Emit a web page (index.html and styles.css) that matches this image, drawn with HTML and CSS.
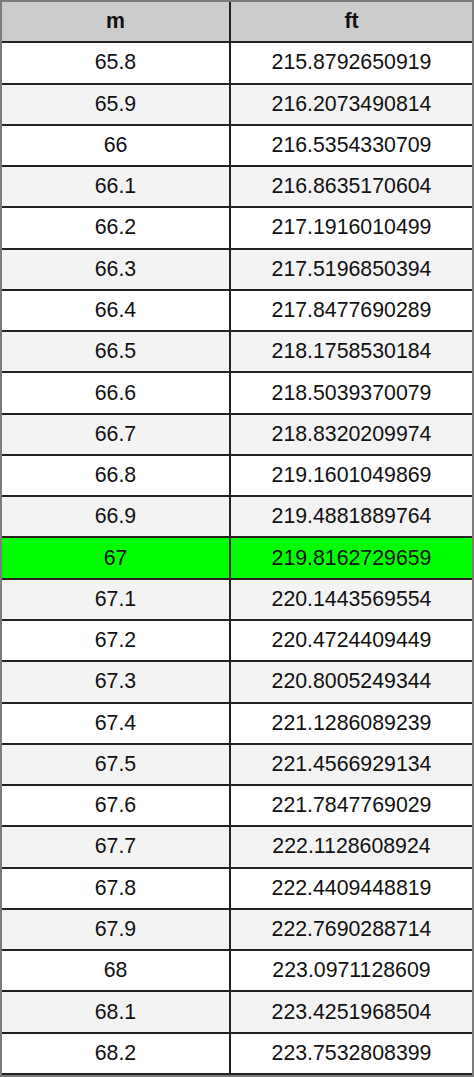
FILE: index.html
```html
<!DOCTYPE html>
<html>
<head>
<meta charset="utf-8">
<link rel="stylesheet" href="styles.css">
</head>
<body>
<table class="conv">
<thead>
<tr><th class="c-m">m</th><th class="c-ft">ft</th></tr>
</thead>
<tbody>
<tr><td>65.8</td><td>215.8792650919</td></tr>
<tr class="alt"><td>65.9</td><td>216.2073490814</td></tr>
<tr><td>66</td><td>216.5354330709</td></tr>
<tr class="alt"><td>66.1</td><td>216.8635170604</td></tr>
<tr><td>66.2</td><td>217.1916010499</td></tr>
<tr class="alt"><td>66.3</td><td>217.5196850394</td></tr>
<tr><td>66.4</td><td>217.8477690289</td></tr>
<tr class="alt"><td>66.5</td><td>218.1758530184</td></tr>
<tr><td>66.6</td><td>218.5039370079</td></tr>
<tr class="alt"><td>66.7</td><td>218.8320209974</td></tr>
<tr><td>66.8</td><td>219.1601049869</td></tr>
<tr class="alt"><td>66.9</td><td>219.4881889764</td></tr>
<tr class="hl"><td>67</td><td>219.8162729659</td></tr>
<tr class="alt"><td>67.1</td><td>220.1443569554</td></tr>
<tr><td>67.2</td><td>220.4724409449</td></tr>
<tr class="alt"><td>67.3</td><td>220.8005249344</td></tr>
<tr><td>67.4</td><td>221.1286089239</td></tr>
<tr class="alt"><td>67.5</td><td>221.4566929134</td></tr>
<tr><td>67.6</td><td>221.7847769029</td></tr>
<tr class="alt"><td>67.7</td><td>222.1128608924</td></tr>
<tr><td>67.8</td><td>222.4409448819</td></tr>
<tr class="alt"><td>67.9</td><td>222.7690288714</td></tr>
<tr><td>68</td><td>223.0971128609</td></tr>
<tr class="alt"><td>68.1</td><td>223.4251968504</td></tr>
<tr><td>68.2</td><td>223.7532808399</td></tr>
</tbody>
</table>
</body>
</html>
```

FILE: styles.css
```css
html, body {
  margin: 0;
  padding: 0;
  background: #ffffff;
}

.conv {
  width: 474px;
  border-collapse: separate;
  border-spacing: 0;
  border: 2px solid #7c7c7c;
  border-bottom-width: 3px;
  font-family: "Liberation Sans", Arial, sans-serif;
  font-size: 21.3px;
  color: #111111;
  table-layout: fixed;
}

.conv tr {
  height: 41.27px;
}

.conv th,
.conv td {
  text-align: center;
  vertical-align: middle;
  padding: 0;
  border-bottom: 2px solid #222222;
}

.conv th:first-child,
.conv td:first-child {
  border-right: 2px solid #222222;
}

.c-m {
  width: 227px;
}

.conv th {
  background: #cccccc;
  font-weight: bold;
}

.conv tr.alt td {
  background: #f3f3f3;
}

.conv tr.hl td {
  background: #00ff00;
}
```
